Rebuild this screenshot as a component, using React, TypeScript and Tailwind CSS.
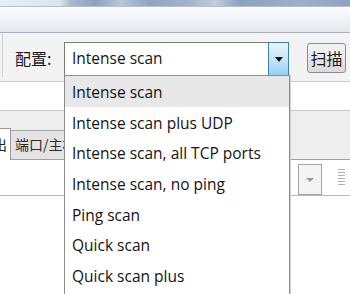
const options = [
  'Intense scan',
  'Intense scan plus UDP',
  'Intense scan, all TCP ports',
  'Intense scan, no ping',
  'Ping scan',
  'Quick scan',
  'Quick scan plus',
];

export default function App() {
  return (
    <div className="relative w-[350px] h-[294px] overflow-hidden bg-white text-[15.5px] text-[#141414] font-['Open_Sans','Noto_Sans_CJK_SC',sans-serif]">
      {/* blurred title strip */}
      <div className="h-[6px] bg-[linear-gradient(90deg,#e6edf5_0px,#dbe5ef_60px,#a9bbd1_70px,#8aa1bf_95px,#b7c6d8_120px,#8ea5c2_150px,#a3b5cc_190px,#c1cedd_215px,#8ba2bf_240px,#9cb0c8_300px,#8ca3c0_350px)]" />
      {/* menu band */}
      <div className="h-[27px] border-t border-b border-t-[#b4c0cf] border-b-[#a9b0bb] bg-gradient-to-b from-[#fdfdfe] to-[#e2e7ef]" />

      {/* toolbar */}
      <div className="relative flex items-start h-[49px] pt-[9px] bg-[#f3f3f3] border-b border-[#c9c9c9]">
        <div className="absolute left-[2px] top-0 bottom-[4px] w-px bg-[#cfcfcf]" />
        <span className="ml-[15px] w-[49px] leading-[33px] text-[16px] font-['Noto_Sans_CJK_SC',sans-serif] text-[#1a1a1a]">配置:</span>
        <div className="flex w-[225px] h-[34px] border border-[#7b7b7b] bg-white">
          <span className="flex-1 pl-[7px] leading-[31px]">Intense scan</span>
          <div className="flex items-center justify-center w-[21px] -my-px -mr-px border border-[#3c7fb1] bg-gradient-to-b from-[#e9f5fc] via-[#c6e6f8] to-[#95d0f1]">
            <svg width="8" height="5" viewBox="0 0 8 5">
              <path d="M0 0h8L4 5z" fill="#111" />
            </svg>
          </div>
        </div>
        <button className="ml-[18px] mt-px w-[39px] h-[30px] rounded-[3px] border border-[#8a8a8a] bg-gradient-to-b from-[#f5f5f5] to-[#dadada] text-[16px] font-['Noto_Sans_CJK_SC',sans-serif] text-[#1a1a1a] leading-[26px]">
          扫描
        </button>
      </div>

      {/* target row */}
      <div className="h-[29px] border-b border-[#c6c6c6] bg-white" />

      {/* tab band */}
      <div className="flex items-end h-[49px] bg-[#eeeeee] border-b border-[#a0a0a0]">
        <div className="relative w-[11px] h-[32px] -mb-px overflow-hidden bg-white border-t border-r border-[#9a9a9a]">
          <span className="absolute right-[3px] top-[5px] text-[14px] font-['Noto_Sans_CJK_SC',sans-serif] text-[#222]">出</span>
        </div>
        <div className="h-[29px] pl-[4px] pr-[6px] bg-[#e3e3e3] border-t border-r border-[#a3a3a3] text-[14px] leading-[27px] font-['Noto_Sans_CJK_SC',sans-serif] text-[#2a2a2a] whitespace-nowrap">
          端口/主机
        </div>
      </div>

      {/* host selector row */}
      <div className="flex items-start h-[36px] pt-[4px] border-b border-[#b8b8b8]">
        <div className="flex-1" />
        <div className="flex items-center justify-center w-[24px] h-[31px] mr-[16px] border border-[#a6a6a6] bg-[#f4f4f4]">
          <svg width="8" height="4" viewBox="0 0 8 4">
            <path d="M0 0h8L4 4z" fill="#9a9a9a" />
          </svg>
        </div>
        <div className="flex flex-col gap-[2px] mt-[5px] mr-[5px]">
          {[0, 1, 2, 3, 4, 5].map((i) => (
            <div key={i} className="w-[7px] h-px bg-[#b0b0b0]" />
          ))}
        </div>
      </div>

      {/* open dropdown list */}
      <div className="absolute left-[64px] top-[75px] w-[226px] h-[230px] border border-[#8c8c8c] bg-white shadow-[1px_0_0_#d0d0d0]">
        {options.map((o, i) => (
          <div
            key={o}
            className={`h-[30.67px] pl-[7px] pt-[2px] leading-[28.67px] whitespace-nowrap ${i === 0 ? 'bg-[#e8e8e8]' : ''}`}
          >
            {o}
          </div>
        ))}
      </div>
    </div>
  );
}
